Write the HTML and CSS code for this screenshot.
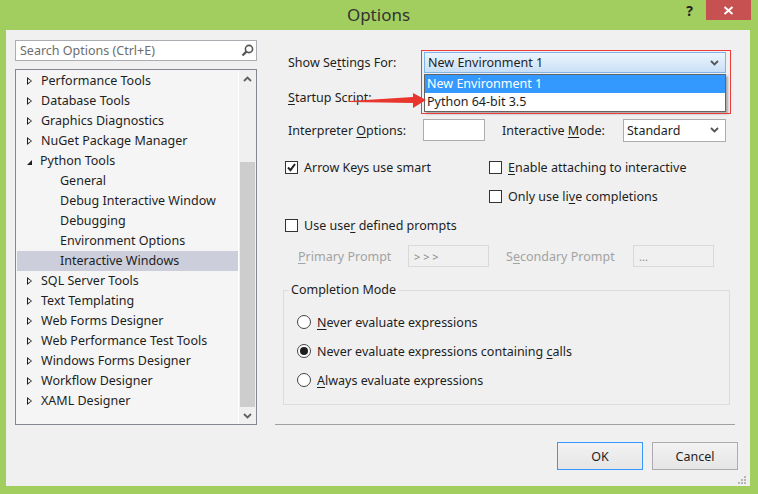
FILE: index.html
```html
<!doctype html>
<html lang="en">
<head>
<meta charset="utf-8">
<title>Options</title>
<link rel="stylesheet" href="styles.css">
</head>
<body>

<div class="window">
  <div class="titlebar">
    <span></span>
    <span class="title">Options</span>
    <span class="controls">
      <span class="help">?</span>
      <span class="close">
        <svg width="11" height="9" viewBox="0 0 11 9"><path d="M1.5 1l8 7M9.5 1l-8 7" stroke="#fff" stroke-width="2" fill="none"/></svg>
      </span>
    </span>
  </div>

  <div class="client">
    <div class="sidebar">
      <div class="search">
        <span>Search Options (Ctrl+E)</span>
        <svg width="13" height="13" viewBox="0 0 13 13">
          <circle cx="8" cy="5" r="3.6" stroke="#555" stroke-width="1.6" fill="none"/>
          <path d="M5.4 7.6L1.5 11.5" stroke="#555" stroke-width="2.2"/>
        </svg>
      </div>
      <div class="tree">
        <ul class="nodes">
          <li class="node"><span class="tw"></span>Performance Tools</li>
          <li class="node"><span class="tw"></span>Database Tools</li>
          <li class="node"><span class="tw"></span>Graphics Diagnostics</li>
          <li class="node"><span class="tw"></span>NuGet Package Manager</li>
          <li class="node"><span class="tw open"></span>Python Tools</li>
          <li class="node child">General</li>
          <li class="node child">Debug Interactive Window</li>
          <li class="node child">Debugging</li>
          <li class="node child">Environment Options</li>
          <li class="node child selected">Interactive Windows</li>
          <li class="node"><span class="tw"></span>SQL Server Tools</li>
          <li class="node"><span class="tw"></span>Text Templating</li>
          <li class="node"><span class="tw"></span>Web Forms Designer</li>
          <li class="node"><span class="tw"></span>Web Performance Test Tools</li>
          <li class="node"><span class="tw"></span>Windows Forms Designer</li>
          <li class="node"><span class="tw"></span>Workflow Designer</li>
          <li class="node"><span class="tw"></span>XAML Designer</li>
        </ul>
        <div class="scrollbar">
          <span class="sb-btn">
            <svg width="9" height="6" viewBox="0 0 9 6"><path d="M1 5l3.5-3.5L8 5" stroke="#606060" stroke-width="1.8" fill="none"/></svg>
          </span>
          <span class="sb-track"><span class="thumb"></span></span>
          <span class="sb-btn">
            <svg width="9" height="6" viewBox="0 0 9 6"><path d="M1 1l3.5 3.5L8 1" stroke="#606060" stroke-width="1.8" fill="none"/></svg>
          </span>
        </div>
      </div>
    </div>

    <div class="main">
      <div class="settings">
        <div class="row row-show">
          <span class="label wide">Show Se<u>t</u>tings For:</span>
          <div class="combo-wrap">
            <div class="combo focused">
              <span>New Environment 1</span>
              <svg class="chev" width="9" height="6" viewBox="0 0 9 6"><path d="M1 1l3.5 3.5L8 1" stroke="#555" stroke-width="1.8" fill="none"/></svg>
            </div>
            <div class="popup">
              <div class="opt hot">New Environment 1</div>
              <div class="opt">Python 64-bit 3.5</div>
            </div>
            <div class="mark"></div>
            <svg class="pointer" width="80" height="18" viewBox="0 0 80 18">
              <polygon points="1,9 64,5 64,1 77,8 64,16 64,11 1,10" fill="#e8352e"/>
            </svg>
          </div>
        </div>

        <div class="row row-startup">
          <span class="label wide"><u>S</u>tartup Script:</span>
          <span class="textbox startup"></span>
        </div>

        <div class="row row-interp">
          <span class="label interp">Interpreter <u>O</u>ptions:</span>
          <span class="textbox small"></span>
          <span class="label mode">Interactive <u>M</u>ode:</span>
          <div class="combo mode-select">
            <span>Standard</span>
            <svg class="chev" width="9" height="6" viewBox="0 0 9 6"><path d="M1 1l3.5 3.5L8 1" stroke="#555" stroke-width="1.8" fill="none"/></svg>
          </div>
        </div>

        <div class="row checks">
          <label class="check left"><span class="box checked">
            <svg width="11" height="11" viewBox="0 0 11 11"><path d="M2 5.5l2.5 2.6L9 2" stroke="#222" stroke-width="2" fill="none"/></svg>
          </span><span>Arrow Keys use smart</span></label>
          <label class="check"><span class="box"></span><span><u>E</u>nable attaching to interactive</span></label>
        </div>

        <div class="row checks">
          <span class="check left"></span>
          <label class="check"><span class="box"></span><span>Only use li<u>v</u>e completions</span></label>
        </div>

        <div class="row checks">
          <label class="check left"><span class="box"></span><span>Use use<u>r</u> defined prompts</span></label>
        </div>

        <div class="row prompts">
          <span class="label dim p1"><u>P</u>rimary Prompt</span>
          <span class="textbox dimbox">&gt; &gt; &gt;</span>
          <span class="label dim p2">S<u>e</u>condary Prompt</span>
          <span class="textbox dimbox">...</span>
        </div>
      </div>

      <fieldset class="group">
        <legend>Completion Mode</legend>
        <label class="radio"><span class="dot"></span><span><u>N</u>ever evaluate expressions</span></label>
        <label class="radio"><span class="dot on"></span><span>Never evaluate expressions containing <u>c</u>alls</span></label>
        <label class="radio"><span class="dot"></span><span><u>A</u>lways evaluate expressions</span></label>
      </fieldset>

      <div class="separator"></div>

      <div class="buttons">
        <button class="btn default">OK</button>
        <button class="btn">Cancel</button>
      </div>
    </div>

    <svg class="grip" width="8" height="8" viewBox="0 0 8 8" fill="#b5b5b5">
      <rect x="6" y="0" width="2" height="2"/>
      <rect x="3" y="3" width="2" height="2"/><rect x="6" y="3" width="2" height="2"/>
      <rect x="0" y="6" width="2" height="2"/><rect x="3" y="6" width="2" height="2"/><rect x="6" y="6" width="2" height="2"/>
    </svg>
  </div>
</div>

</body>
</html>
```

FILE: styles.css
```css
* {
  box-sizing: border-box;
}
body {
  margin: 0;
  background: #fff;
  font-family: "Noto Sans", "Open Sans", sans-serif;
  font-size: 12.5px;
  color: #1e1e1e;
}
u {
  text-decoration-thickness: 1px;
  text-underline-offset: 2px;
}
.window {
  width: 758px;
  height: 494px;
  background: #a2cd5f;
  display: flex;
  flex-direction: column;
  position: relative;
}
.titlebar {
  height: 30px;
  display: grid;
  grid-template-columns: 1fr auto 1fr;
  padding-right: 7px;
}
.title {
  font-size: 17px;
  color: #333;
  line-height: 30px;
  padding-left: 6px;
}
.controls {
  display: flex;
  justify-content: flex-end;
  align-items: flex-start;
}
.help {
  font-weight: bold;
  font-size: 14px;
  color: #222;
  margin: 3px 13px 0 0;
  line-height: 16px;
}
.close {
  width: 45px;
  height: 20px;
  background: #c75050;
  display: flex;
  align-items: center;
  justify-content: center;
}
.client {
  flex: 1;
  margin: 0 8px 8px 6px;
  background: #f0f0f0;
  display: flex;
  position: relative;
}

/* left: search + tree */
.sidebar {
  width: 251px;
  padding: 10px 0 0 9px;
}
.search {
  height: 21px;
  background: #fff;
  border: 1px solid #abadb3;
  display: flex;
  align-items: center;
  justify-content: space-between;
  padding: 0 2px 0 4px;
  color: #6d6d6d;
}
.tree {
  margin-top: 8px;
  height: 356px;
  border: 1px solid #828790;
  background: #f5f5f5;
  display: flex;
}
.nodes {
  flex: 1;
  list-style: none;
  margin: 0;
  padding: 1px 0 0 1px;
}
.node {
  height: 20px;
  line-height: 20px;
  padding-left: 10px;
  display: flex;
  align-items: center;
  white-space: nowrap;
}
.node.child {
  padding-left: 43px;
}
.node.selected {
  background: #cccedb;
}
.tw {
  width: 0;
  height: 0;
  border-left: 5px solid #1e1e1e;
  border-top: 4px solid transparent;
  border-bottom: 4px solid transparent;
  margin-right: 9px;
  position: relative;
}
.tw::after {
  content: "";
  position: absolute;
  left: -4px;
  top: -2px;
  border-left: 3px solid #f5f5f5;
  border-top: 2px solid transparent;
  border-bottom: 2px solid transparent;
}
.tw.open {
  border: 0;
  border-right: 5px solid #1e1e1e;
  border-top: 5px solid transparent;
  margin-right: 8px;
  margin-left: 0;
  margin-top: 3px;
}
.tw.open::after {
  display: none;
}
.scrollbar {
  width: 18px;
  border-left: 1px solid #fff;
  background: #f0f0f0;
  display: flex;
  flex-direction: column;
}
.sb-btn {
  height: 17px;
  display: flex;
  align-items: center;
  justify-content: center;
}
.sb-track {
  flex: 1;
  display: flex;
  flex-direction: column;
  justify-content: flex-end;
  padding: 0 1px;
}
.thumb {
  height: 245px;
  background: #cdcdcd;
}

/* right: settings */
.main {
  flex: 1;
  padding: 22px 0 0 18px;
}
.settings {
  padding-left: 13px;
}
.row {
  display: flex;
  align-items: center;
}
.row-show {
  height: 21px;
}
.label.wide {
  width: 136px;
}
.combo-wrap {
  position: relative;
}
.combo {
  width: 302px;
  height: 21px;
  border: 1px solid #acacac;
  background: #fff;
  display: flex;
  align-items: center;
  justify-content: space-between;
  padding: 0 6px 0 3px;
}
.combo.focused {
  border-color: #7eb4ea;
  background: linear-gradient(#ecf4fc, #c9e0f7);
}
.popup {
  position: absolute;
  left: 0;
  top: 22px;
  width: 302px;
  border: 1px solid #646464;
  background: #fff;
  box-shadow: 2px 2px 2px rgba(0, 0, 0, 0.3);
}
.opt {
  height: 18px;
  line-height: 18px;
  padding-left: 2px;
}
.opt.hot {
  background: #3399ff;
  color: #fff;
}
.mark {
  position: absolute;
  left: -3px;
  top: -2px;
  width: 310px;
  height: 64px;
  border: 1px solid #ec3b3b;
  pointer-events: none;
}
.pointer {
  position: absolute;
  left: -75px;
  top: 40px;
}
.row-startup {
  height: 21px;
  margin-top: 14px;
}
.textbox {
  height: 22px;
  border: 1px solid #acacac;
  background: #fff;
  display: inline-flex;
  align-items: center;
  padding-left: 4px;
}
.textbox.startup {
  width: 302px;
}
.row-interp {
  height: 22px;
  margin-top: 11px;
}
.label.interp {
  width: 135px;
}
.textbox.small {
  width: 62px;
}
.label.mode {
  margin-left: 17px;
  width: 121px;
}
.combo.mode-select {
  width: 103px;
  height: 23px;
}
.checks {
  margin-top: 15px;
  height: 14px;
}
.row-interp + .checks {
  margin-top: 19px;
}
.check {
  display: flex;
  align-items: center;
}
.check.left {
  width: 204px;
  margin-left: -3px;
}
.box {
  width: 13px;
  height: 13px;
  border: 1px solid #333;
  background: #fff;
  margin-right: 6px;
  display: flex;
  align-items: center;
  justify-content: center;
}
.prompts {
  height: 22px;
  margin-top: 13px;
  padding-left: 10px;
}
.dim {
  color: #a3a3a3;
}
.label.p1 {
  width: 110px;
}
.label.p2 {
  margin-left: 17px;
  width: 127px;
}
.dimbox {
  width: 81px;
  border-color: #d9d9d9;
  background: #f0f0f0;
  color: #888;
  font-size: 11px;
  padding-left: 5px;
}

.group {
  margin: 16px 0 0 8px;
  width: 447px;
  height: 122px;
  border: 1px solid #dcdcdc;
  padding: 18px 0 0 13px;
}
.group legend {
  padding: 0 2px;
  margin-left: -8px;
  line-height: 14px;
}
.radio {
  display: flex;
  align-items: center;
  height: 14px;
  margin-bottom: 15px;
}
.dot {
  width: 14px;
  height: 14px;
  border: 1px solid #444;
  border-radius: 50%;
  background: #fff;
  margin-right: 6px;
  display: flex;
  align-items: center;
  justify-content: center;
}
.dot.on::after {
  content: "";
  width: 8px;
  height: 8px;
  border-radius: 50%;
  background: #1e1e1e;
}
.separator {
  margin-top: 19px;
  width: 460px;
  height: 1px;
  background: #a0a0a0;
}
.buttons {
  margin-top: 17px;
  display: flex;
  gap: 9px;
  padding-left: 282px;
}
.btn {
  width: 86px;
  height: 28px;
  border: 1px solid #acacac;
  background: linear-gradient(#f2f2f2, #e5e5e5);
  font: inherit;
  color: #1e1e1e;
}
.btn.default {
  border-color: #3399ff;
}
.grip {
  position: absolute;
  right: 4px;
  bottom: 2px;
}
```
